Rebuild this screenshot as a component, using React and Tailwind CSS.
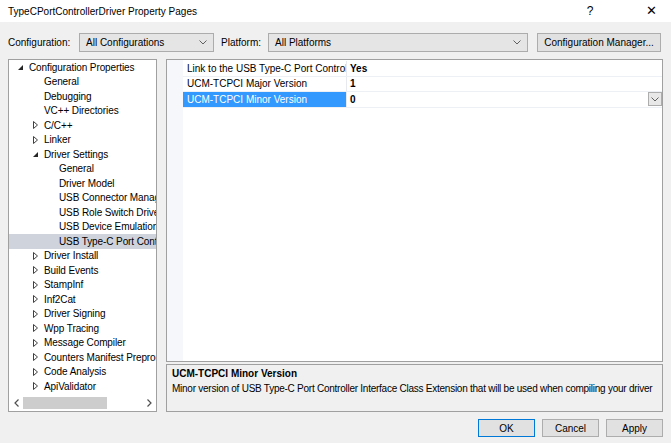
const tree = [
  { label: 'Configuration Properties', level: 0, icon: 'open' },
  { label: 'General', level: 1 },
  { label: 'Debugging', level: 1 },
  { label: 'VC++ Directories', level: 1 },
  { label: 'C/C++', level: 1, icon: 'closed' },
  { label: 'Linker', level: 1, icon: 'closed' },
  { label: 'Driver Settings', level: 1, icon: 'open' },
  { label: 'General', level: 2 },
  { label: 'Driver Model', level: 2 },
  { label: 'USB Connector Manager', level: 2 },
  { label: 'USB Role Switch Driver', level: 2 },
  { label: 'USB Device Emulation', level: 2 },
  { label: 'USB Type-C Port Controller', level: 2, selected: true },
  { label: 'Driver Install', level: 1, icon: 'closed' },
  { label: 'Build Events', level: 1, icon: 'closed' },
  { label: 'StampInf', level: 1, icon: 'closed' },
  { label: 'Inf2Cat', level: 1, icon: 'closed' },
  { label: 'Driver Signing', level: 1, icon: 'closed' },
  { label: 'Wpp Tracing', level: 1, icon: 'closed' },
  { label: 'Message Compiler', level: 1, icon: 'closed' },
  { label: 'Counters Manifest Preprocessor', level: 1, icon: 'closed' },
  { label: 'Code Analysis', level: 1, icon: 'closed' },
  { label: 'ApiValidator', level: 1, icon: 'closed' },
]

const indent = ['pl-0', 'pl-[15px]', 'pl-[30px]']

const props = [
  { name: 'Link to the USB Type-C Port Controller Interface Class Extension', value: 'Yes' },
  { name: 'UCM-TCPCI Major Version', value: '1' },
  { name: 'UCM-TCPCI Minor Version', value: '0', selected: true },
]

function Chevron({ className = '' }) {
  return (
    <svg width="8" height="5" viewBox="0 0 8 5" className={className}>
      <polyline points="0.5,0.5 4,4 7.5,0.5" fill="none" stroke="#606060" strokeWidth="1" />
    </svg>
  )
}

function Expander({ type }) {
  if (type === 'open')
    return (
      <svg width="5" height="5" viewBox="0 0 5 5">
        <polygon points="5,0 5,5 0,5" fill="#262626" />
      </svg>
    )
  if (type === 'closed')
    return (
      <svg width="5" height="8" viewBox="0 0 5 8">
        <polygon points="0.5,0.5 4.5,4 0.5,7.5" fill="none" stroke="#404040" strokeWidth="1" />
      </svg>
    )
  return null
}

function Dropdown({ width, text }) {
  return (
    <div
      className={`${width} h-[19px] flex items-center justify-between pl-[6px] pr-[6px] bg-[#e5e5e5] border border-[#acacac]`}
    >
      <span>{text}</span>
      <Chevron />
    </div>
  )
}

function Button({ children, primary }) {
  return (
    <div
      className={`w-[57px] h-[18px] flex items-center justify-center bg-[#e1e1e1] border ${
        primary ? 'border-[#0078d7]' : 'border-[#adadad]'
      }`}
    >
      {children}
    </div>
  )
}

export default function App() {
  return (
    <div
      className="w-[671px] h-[447px] bg-white overflow-hidden text-[10px] text-black flex flex-col"
      style={{ fontFamily: '"Liberation Sans", Arial, sans-serif' }}
    >
      {/* title bar */}
      <div className="h-[22px] flex items-center pl-[8px] shrink-0">
        <span className="flex-1">TypeCPortControllerDriver Property Pages</span>
        <span className="w-[20px] text-center text-[12px] mr-[41px]">?</span>
        <span className="w-[20px] text-center text-[13px] mr-[10px] font-light">✕</span>
      </div>

      <div className="h-[421px] bg-[#f0f0f0] shrink-0 flex flex-col">
        {/* config row */}
        <div className="flex items-center h-[19px] mt-[11px] pl-[8px]">
          <span className="w-[71px]">Configuration:</span>
          <Dropdown width="w-[135px]" text="All Configurations" />
          <span className="ml-[7px] w-[47px]">Platform:</span>
          <Dropdown width="w-[260px]" text="All Platforms" />
          <div className="ml-[9px] w-[124px] h-[19px] flex items-center justify-center bg-[#e1e1e1] border border-[#adadad]">
            Configuration Manager...
          </div>
        </div>

        {/* content */}
        <div className="flex mt-[7px] pl-[8px] h-[353px]">
          {/* tree */}
          <div className="w-[149px] h-[353px] bg-white border border-[#a0a0a0] flex flex-col">
            <div className="flex-1 overflow-hidden">
              {tree.map((t, i) => (
                <div
                  key={i}
                  className={`h-[14.5px] flex items-center whitespace-nowrap ${indent[t.level]} ${
                    t.selected ? 'bg-[#cfd3dc]' : ''
                  }`}
                >
                  <div className="w-[20px] shrink-0 flex justify-end pr-[6px]">
                    <Expander type={t.icon} />
                  </div>
                  <span className="tracking-[-0.1px]">{t.label}</span>
                </div>
              ))}
            </div>
            <div className="h-[14px] flex items-center mb-[1px]">
              <span className="w-[14px] flex justify-center">
                <svg width="5" height="8" viewBox="0 0 5 8">
                  <polyline points="4.5,0.5 1,4 4.5,7.5" fill="none" stroke="#505050" strokeWidth="1.2" />
                </svg>
              </span>
              <div className="w-[84px] h-[12px] bg-[#cdcdcd]" />
              <div className="flex-1" />
              <span className="w-[14px] flex justify-center">
                <svg width="5" height="8" viewBox="0 0 5 8">
                  <polyline points="0.5,0.5 4,4 0.5,7.5" fill="none" stroke="#505050" strokeWidth="1.2" />
                </svg>
              </span>
            </div>
          </div>

          {/* right column */}
          <div className="ml-[9px] w-[497px] flex flex-col">
            <div className="h-[303px] bg-white border border-[#a0a0a0] flex">
              <div className="w-[16px] bg-[#f5f7fa]" />
              <div className="flex-1 pt-[1px]">
                {props.map((p, i) => (
                  <div key={i} className="h-[15.5px] flex border-b border-[#edf0f5]">
                    <div
                      className={`w-[164px] shrink-0 overflow-hidden whitespace-nowrap pl-[4px] flex items-center border-r border-[#e6e9ef] ${
                        p.selected ? 'bg-[#3399ff] text-white' : ''
                      }`}
                    >
                      <span className="min-w-0 overflow-hidden">{p.name}</span>
                    </div>
                    <div className="flex-1 flex items-center pl-[3px] font-bold">
                      <span className="flex-1">{p.value}</span>
                      {p.selected && (
                        <div className="w-[14px] h-[14px] flex items-center justify-center bg-[#e8e8e8] border border-[#adadad]">
                          <Chevron />
                        </div>
                      )}
                    </div>
                  </div>
                ))}
              </div>
            </div>
            <div className="mt-[2px] h-[48px] border border-[#a0a0a0] pl-[5px] pt-[1px] whitespace-nowrap overflow-hidden">
              <div className="font-bold leading-[15px]">UCM-TCPCI Minor Version</div>
              <div className="leading-[15px] tracking-[-0.25px]">
                Minor version of USB Type-C Port Controller Interface Class Extension that will be used when compiling your driver
              </div>
            </div>
          </div>
        </div>

        {/* buttons */}
        <div className="flex justify-end gap-[7px] pr-[8px] mt-[7px]">
          <Button primary>OK</Button>
          <Button>Cancel</Button>
          <Button>Apply</Button>
        </div>
      </div>
    </div>
  )
}
